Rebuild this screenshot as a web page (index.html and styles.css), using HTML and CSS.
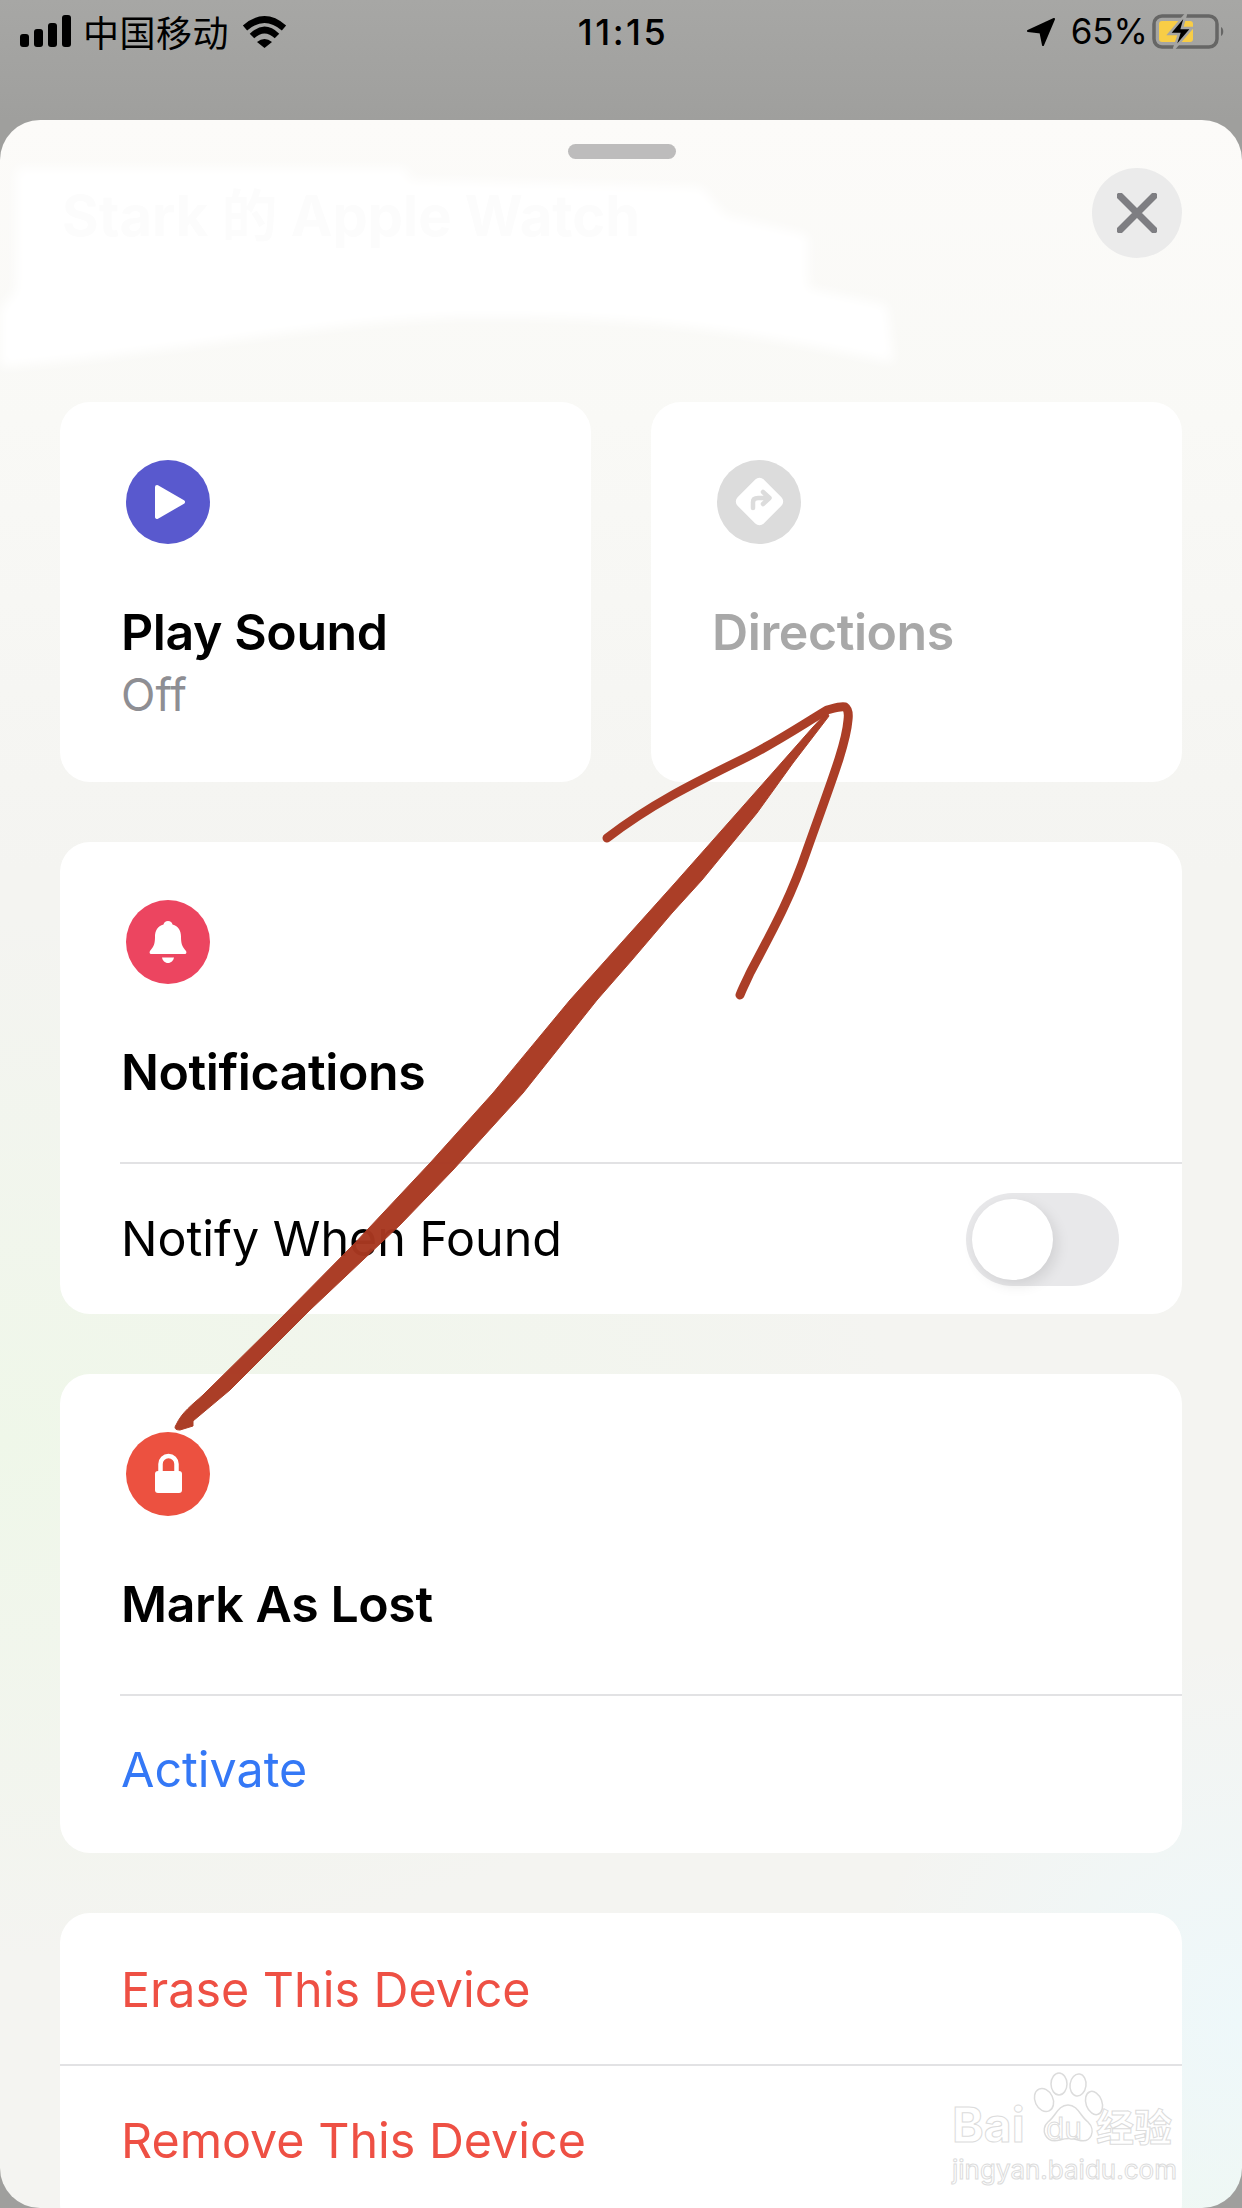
FILE: index.html
```html
<!DOCTYPE html>
<html>
<head>
    <title>Find My Device</title>
    <meta charset="UTF-8">
    <meta name="viewport" content="width=device-width, initial-scale=1.0">
    <link rel="stylesheet" href="styles.css">
</head>
<body>
<header class="status-bar">
    <div class="status-left">
        <svg class="signal" width="51" height="33" viewBox="0 0 51 33">
            <rect x="0" y="19" width="9" height="13" rx="3"/>
            <rect x="14" y="14" width="9" height="18" rx="3"/>
            <rect x="28" y="8" width="9" height="24" rx="3"/>
            <rect x="42" y="0" width="9" height="32" rx="3"/>
        </svg>
        <span class="carrier">中国移动</span>
        <svg class="wifi" width="45" height="33" viewBox="0 0 45 33">
            <path d="M3 13Q22.500 -4 42 13" fill="none" stroke="#000" stroke-width="6.500"/>
            <path d="M10 21Q22.500 9 35 21" fill="none" stroke="#000" stroke-width="6.500"/>
            <path d="M15 27Q22.500 21 30 27L22.500 33Z"/>
        </svg>
    </div>
    <div class="status-time">11:15</div>
    <div class="status-right">
        <svg class="loc" width="28" height="28" viewBox="0 0 28 28">
            <path d="M1 13L27 1L16 27L13.500 14.500Z" stroke="#000" stroke-width="2" stroke-linejoin="round"/>
        </svg>
        <span class="battery-pct">65%</span>
        <svg class="battery" width="74" height="36" viewBox="0 0 74 36">
            <rect x="2" y="2" width="63" height="31" rx="8" fill="none" stroke="#666665" stroke-width="3.500"/>
            <rect x="7" y="7" width="34" height="21" rx="3" fill="#f8cd46"/>
            <path d="M69 13c3 1 3 8 0 9Z" fill="#666665"/>
            <path d="M34 0L17 20H27L22 35L40 14H30Z" stroke="#a5a5a3" stroke-width="2.500"/>
        </svg>
    </div>
</header>

<div class="sheet">
    <div class="sheet-head">
        <svg class="retouch" width="1242" height="282" viewBox="0 0 1242 282">
            <path d="M16 48H408V60L701 67L725 95L808 115V168L887 185L894 243C720 205 620 195 452 197C300 205 160 235 0 247V190L16 170Z" fill="#fff"/>
        </svg>
        <div class="grabber"></div>
        <div class="head-row">
            <div class="device-name">Stark 的 Apple Watch</div>
            <div class="close-btn">
                <svg width="40" height="40" viewBox="0 0 40 40">
                    <path d="M3 3L37 37M37 3L3 37" stroke="#7e7e82" stroke-width="7" stroke-linecap="round"/>
                </svg>
            </div>
        </div>
    </div>

    <div class="tile-row">
        <div class="card tile">
            <svg class="icon" width="84" height="84" viewBox="0 0 84 84">
                <circle cx="42" cy="42" r="42" fill="#5959ce"/>
                <path d="M31 27L57 42L31 57Z" fill="#fff" stroke="#fff" stroke-width="4" stroke-linejoin="round"/>
            </svg>
            <div class="title">Play Sound</div>
            <div class="sub">Off</div>
        </div>
        <div class="card tile">
            <svg class="icon" width="84" height="84" viewBox="0 0 84 84">
                <circle cx="42" cy="42" r="42" fill="#dcdcdc"/>
                <rect x="24" y="23" width="37" height="37" rx="6" fill="#fff" transform="rotate(45 42.500 41.500)"/>
                <path d="M36 48V42Q36 38 41 38H52M46 32L52.500 38L46 44" fill="none" stroke="#dcdcdc" stroke-width="4.500" stroke-linecap="round" stroke-linejoin="round"/>
            </svg>
            <div class="title title-off">Directions</div>
        </div>
    </div>

    <div class="card">
        <div class="card-top">
            <svg class="icon" width="84" height="84" viewBox="0 0 84 84">
                <circle cx="42" cy="42" r="42" fill="#ec4560"/>
                <path d="M42 21c-2.500 0-4 1.500-4.500 3.500c-6 1.500-8.500 6.500-8.500 12c0 7-1 10-5 14.500c-.8 1-.4 3 1 3h34c1.400 0 1.800-2 1-3c-4-4.500-5-7.500-5-14.500c0-5.500-2.500-10.500-8.500-12c-.5-2-2-3.500-4.500-3.500zM36 57.500h12c-.5 3-3 5.500-6 5.500s-5.500-2.500-6-5.500z" fill="#fff"/>
            </svg>
            <div class="title">Notifications</div>
        </div>
        <div class="row row-toggle">
            <span class="row-text">Notify When Found</span>
            <div class="toggle"><div class="knob"></div></div>
        </div>
    </div>

    <div class="card">
        <div class="card-top">
            <svg class="icon" width="84" height="84" viewBox="0 0 84 84">
                <circle cx="42" cy="42" r="42" fill="#ec5140"/>
                <rect x="29" y="39" width="27" height="22" rx="3" fill="#fff"/>
                <path d="M34.500 41V32a8 8 0 0 1 16 0V41" fill="none" stroke="#fff" stroke-width="4.500"/>
            </svg>
            <div class="title">Mark As Lost</div>
        </div>
        <div class="row row-tall">
            <span class="row-text link">Activate</span>
        </div>
    </div>

    <div class="card card-last">
        <div class="row danger-row"><span class="row-text danger">Erase This Device</span></div>
        <div class="row danger-row"><span class="row-text danger">Remove This Device</span></div>
    </div>
</div>

<!-- hand drawn arrow on top of the screenshot -->
<svg class="ink" width="1242" height="2208" viewBox="0 0 1242 2208">
    <path class="ink-main" d="M176 1425C182 1412 192 1405 203 1395L277 1322L353 1245L430 1163L493 1093L570 1000L675 883L737 813L813 727L827 712L829 716L793 763L757 813L702 880L672 913L632 960L597 1000L523 1093L453 1170L400 1225L310 1310L230 1390L193 1421L193 1426L180 1430C175 1430 174 1428 176 1425Z"/>
    <path class="ink-barb" d="M607 838C650 805 690 785 747 757C775 743 802 725 827 710C835 708 840 706 845 707C848 709 849 712 848 720C846 745 830 785 807 850C790 900 770 935 750 973C746 982 743 987 740 995"/>
</svg>

<div class="watermark">
    <svg class="paw" width="80" height="76" viewBox="0 0 80 76">
        <ellipse cx="16" cy="28" rx="9" ry="12" transform="rotate(-25 16 28)"/>
        <ellipse cx="31" cy="12" rx="8" ry="11"/>
        <ellipse cx="50" cy="13" rx="8" ry="11" transform="rotate(8 50 13)"/>
        <ellipse cx="66" cy="31" rx="8" ry="12" transform="rotate(-20 66 31)"/>
        <path d="M40 33C30 33 28 44 20 50C12 57 17 72 32 68C38 66 44 66 50 68C64 72 68 58 60 50C52 44 50 33 40 33Z"/>
    </svg>
    <span class="wm-bai">Bai</span>
    <span class="wm-du">du</span>
    <span class="wm-cn">经验</span>
    <span class="wm-url">jingyan.baidu.com</span>
</div>
</body>
</html>
```

FILE: styles.css
```css
html, body {
    margin: 0;
    padding: 0;
}

body {
    width: 1242px;
    height: 2208px;
    overflow: hidden;
    position: relative;
    background: linear-gradient(#a7a7a5, #9f9f9d 120px, #9f9f9d);
    font-family: Inter, "Noto Sans CJK SC", sans-serif;
    color: #000;
}

/* status bar */
.status-bar {
    height: 120px;
    box-sizing: border-box;
    padding: 13px 16px 0 20px;
    display: grid;
    grid-template-columns: 1fr auto 1fr;
    align-items: start;
}

.status-left, .status-right {
    display: flex;
    align-items: center;
    height: 36px;
}

.status-right {
    justify-content: flex-end;
}

.carrier {
    font-family: "Noto Sans CJK SC", sans-serif;
    font-size: 36px;
    line-height: 36px;
    margin-left: 12px;
    letter-spacing: 0.5px;
}

.wifi {
    margin-left: 13px;
}

.status-time {
    font-size: 36px;
    font-weight: 500;
    letter-spacing: 2.5px;
    line-height: 36px;
    margin-top: 1px;
}

.battery-pct {
    font-size: 35px;
    line-height: 36px;
    margin-left: 16px;
}

.loc, .battery {
    margin-top: 2px;
}

.battery {
    margin-left: 4px;
}

/* sheet */
.sheet {
    height: 2088px;
    box-sizing: border-box;
    padding: 0 60px;
    border-radius: 40px;
    overflow: hidden;
    background:
        radial-gradient(380px 380px at 1242px 1900px, #eef8fa, transparent),
        radial-gradient(900px 520px at 0 1320px, #eff7e9, transparent),
        radial-gradient(300px 300px at 1242px 2150px, #eef8ee, transparent),
        linear-gradient(#fcfbf9, #f9f9f6 300px, #f4f4f1 750px);
}

.sheet-head {
    height: 282px;
    margin: 0 -60px;
    padding: 24px 60px 0 62px;
    box-sizing: border-box;
    position: relative;
}

.retouch {
    position: absolute;
    top: 0;
    left: 0;
    filter: blur(6px);
}

.grabber {
    position: relative;
    width: 108px;
    height: 15px;
    border-radius: 8px;
    background: #bdbcbc;
    margin: 0 auto 9px;
}

.head-row {
    position: relative;
    display: flex;
    justify-content: space-between;
    align-items: flex-start;
}

.device-name {
    font-size: 56px;
    font-weight: 700;
    line-height: 68px;
    margin-top: 14px;
    color: #fcfcfc;
}

.close-btn {
    width: 90px;
    height: 90px;
    border-radius: 50%;
    background: #ebebeb;
    display: flex;
    align-items: center;
    justify-content: center;
}

/* cards */
.card {
    background: #fff;
    border-radius: 30px;
    margin-bottom: 60px;
    overflow: hidden;
}

.tile-row {
    display: flex;
    gap: 60px;
}

.tile {
    flex: 1;
    height: 380px;
    box-sizing: border-box;
    padding: 58px 61px 0;
}

.card-top {
    padding: 58px 0 0 61px;
    height: 320px;
    box-sizing: border-box;
}

.icon {
    display: block;
    margin-left: 5px;
}

.title {
    font-size: 50px;
    font-weight: 600;
    line-height: 60px;
    margin-top: 58px;
    letter-spacing: -0.4px;
}

.title-off {
    color: #a8a8a8;
}

.sub {
    font-size: 45px;
    line-height: 54px;
    margin-top: 6px;
    color: #8e8e93;
}

.row {
    margin-left: 60px;
    border-top: 2px solid #e2e2e4;
    box-sizing: border-box;
    display: flex;
    align-items: center;
}

.row-toggle {
    height: 152px;
    justify-content: space-between;
    padding-right: 63px;
}

.row-tall {
    height: 159px;
    padding-bottom: 10px;
}

.danger-row {
    height: 151px;
}

.danger-row:first-child {
    border-top: none;
    padding-top: 2px;
}

.card-last .danger-row:last-child {
    margin-left: 0;
    padding-left: 61px;
}

.row-text {
    font-size: 48.4px;
    line-height: 60px;
    margin-left: 1px;
}

.danger-row:last-child .row-text {
    margin-left: 0;
}

.link {
    color: #3478f6;
}

.danger {
    color: #ee5044;
}

.card-last {
    height: 320px;
    margin-bottom: 0;
}

/* toggle */
.toggle {
    width: 153px;
    height: 93px;
    border-radius: 47px;
    background: #e8e8ea;
    box-sizing: border-box;
    padding: 6px;
}

.knob {
    width: 81px;
    height: 81px;
    border-radius: 50%;
    background: #fff;
    box-shadow: 4px 5px 14px rgba(0, 0, 0, 0.1);
}

/* overlays */
.ink {
    position: absolute;
    top: 0;
    left: 0;
    opacity: 0.97;
}

.ink-main {
    fill: #a93821;
    stroke: #a93821;
    stroke-width: 1;
    stroke-linejoin: round;
}

.ink-barb {
    fill: none;
    stroke: #a93821;
    stroke-width: 9;
    stroke-linecap: round;
    stroke-linejoin: round;
}

.watermark {
    position: absolute;
    left: 950px;
    top: 2070px;
    width: 230px;
    height: 130px;
    color: #fff;
    -webkit-text-stroke: 1px #dcdcdc;
}

.watermark span {
    position: absolute;
    white-space: nowrap;
}

.paw {
    position: absolute;
    left: 78px;
    top: 2px;
    fill: #fff;
    stroke: #dcdcdc;
    stroke-width: 1.500;
}

.wm-bai {
    left: 2px;
    top: 28px;
    font-size: 48px;
    line-height: 54px;
    font-weight: 700;
}

.wm-du {
    left: 96px;
    top: 40px;
    font-size: 30px;
    line-height: 36px;
}

.wm-cn {
    left: 146px;
    top: 33px;
    font-family: "Noto Sans CJK SC", sans-serif;
    font-size: 38px;
    line-height: 44px;
    font-weight: 700;
}

.wm-url {
    left: 2px;
    top: 82px;
    font-size: 26px;
    line-height: 36px;
}
```
